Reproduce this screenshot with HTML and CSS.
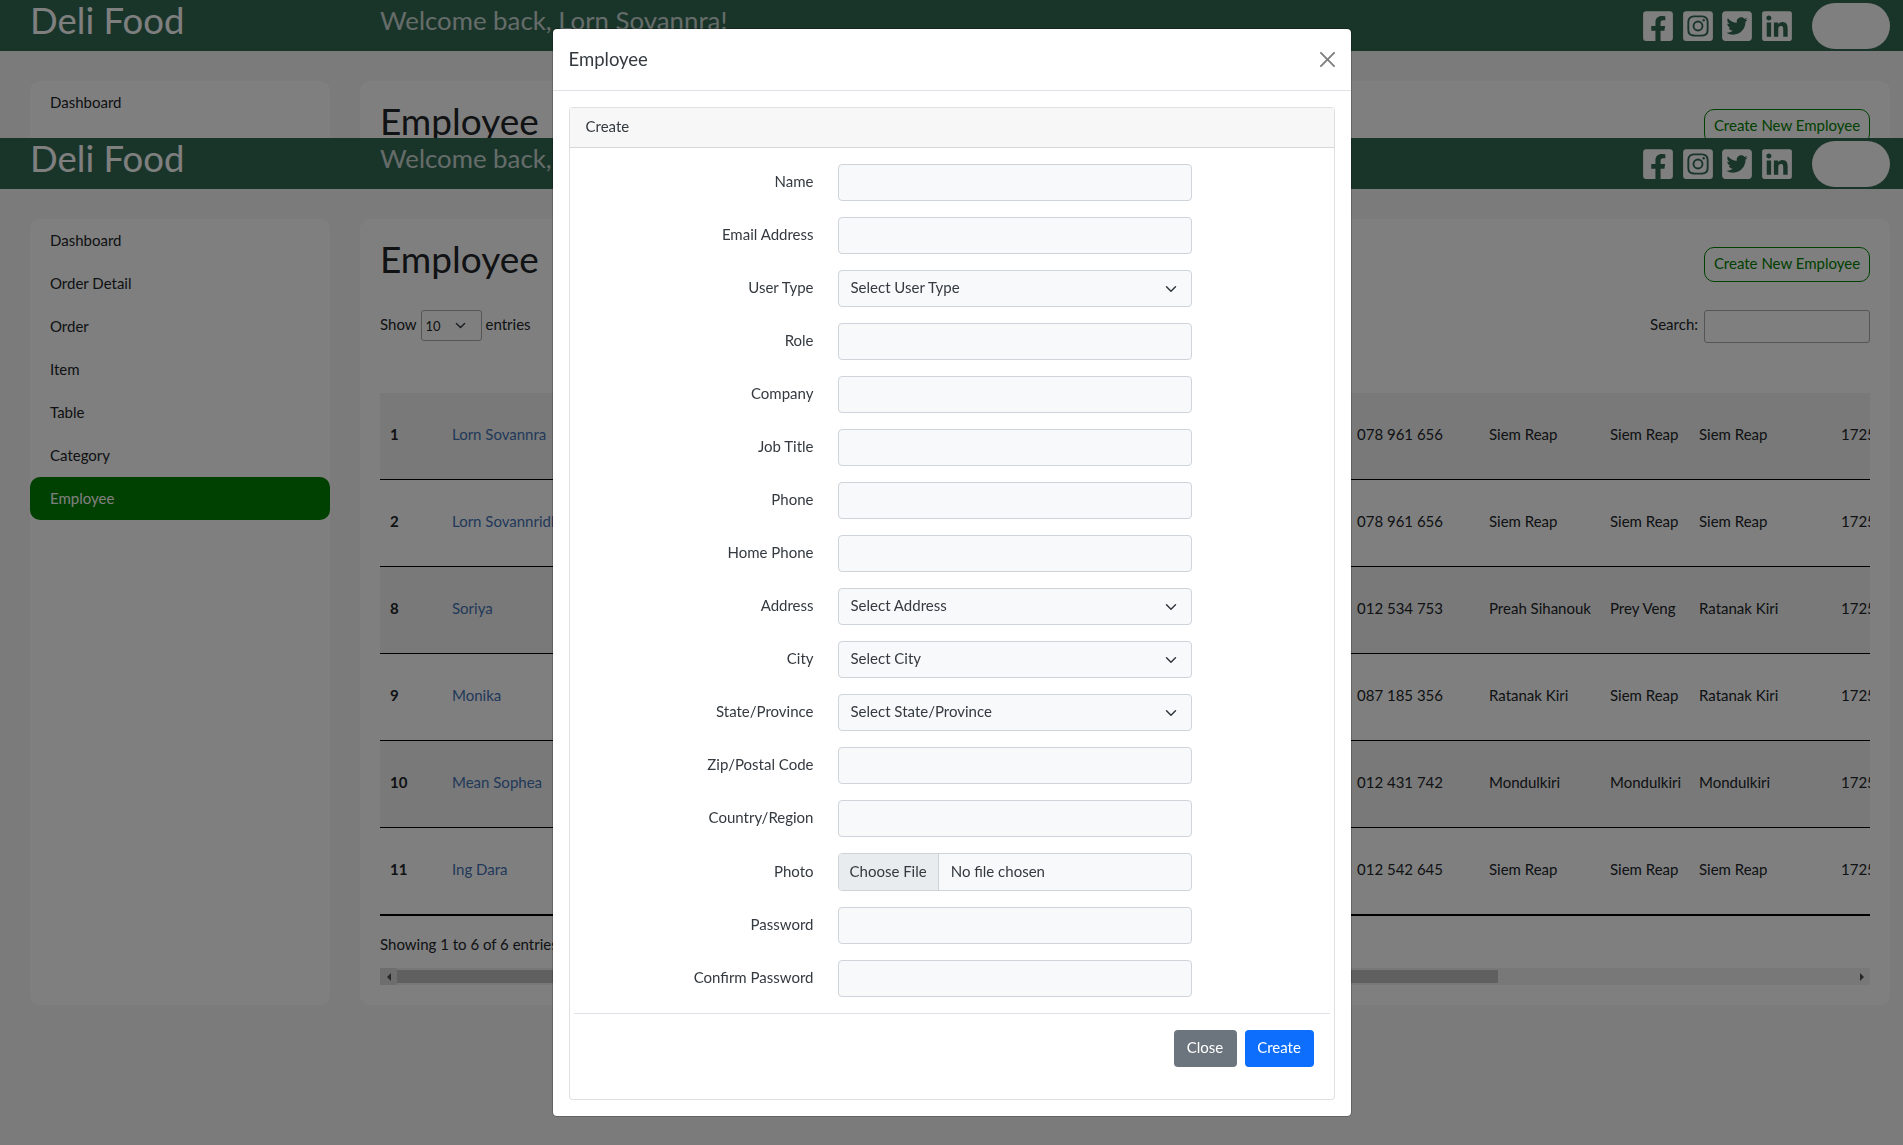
FILE: index.html
```html
<!DOCTYPE html>
<html lang="en">
<head>
    <meta charset="UTF-8">
    <title>Deli Food - Employee</title>
    <link rel="stylesheet" href="styles.css">
</head>
<body>

<svg class="icon-defs" aria-hidden="true">
    <symbol id="ic-facebook" viewBox="0 0 448 512"><path d="M400 32H48A48 48 0 0 0 0 80v352a48 48 0 0 0 48 48h137.25V327.69h-63V256h63v-54.64c0-62.15 37-96.48 93.67-96.48 27.14 0 55.52 4.84 55.52 4.84v61h-31.27c-30.81 0-40.42 19.12-40.42 38.73V256h68.78l-11 71.69h-57.78V480H400a48 48 0 0 0 48-48V80a48 48 0 0 0-48-48z"/></symbol>
    <symbol id="ic-instagram" viewBox="0 0 448 512"><path d="M224,202.66A53.34,53.34,0,1,0,277.36,256,53.38,53.38,0,0,0,224,202.66Zm124.71-41a54,54,0,0,0-30.41-30.41c-21-8.29-71-6.43-94.3-6.43s-73.25-1.93-94.31,6.43a54,54,0,0,0-30.41,30.41c-8.28,21-6.43,71.05-6.43,94.33S91,329.26,99.32,350.33a54,54,0,0,0,30.41,30.41c21,8.29,71,6.43,94.31,6.43s73.24,1.93,94.3-6.43a54,54,0,0,0,30.41-30.41c8.35-21,6.43-71.05,6.43-94.33S357.1,182.74,348.75,161.67ZM224,338a82,82,0,1,1,82-82A81.9,81.9,0,0,1,224,338Zm85.38-148.3a19.14,19.14,0,1,1,19.13-19.14A19.1,19.1,0,0,1,309.42,189.74ZM400,32H48A48,48,0,0,0,0,80V432a48,48,0,0,0,48,48H400a48,48,0,0,0,48-48V80A48,48,0,0,0,400,32ZM382.88,322c-1.29,25.63-7.14,48.34-25.85,67s-41.4,24.63-67,25.85c-26.41,1.49-105.59,1.49-132,0-25.63-1.29-48.26-7.15-67-25.85s-24.63-41.42-25.85-67c-1.49-26.42-1.49-105.61,0-132,1.29-25.63,7.07-48.34,25.85-67s41.47-24.56,67-25.78c26.41-1.49,105.59-1.49,132,0,25.63,1.29,48.33,7.15,67,25.85s24.63,41.42,25.85,67.05C384.37,216.44,384.37,295.56,382.88,322Z"/></symbol>
    <symbol id="ic-twitter" viewBox="0 0 448 512"><path d="M400 32H48C21.5 32 0 53.5 0 80v352c0 26.5 21.5 48 48 48h352c26.5 0 48-21.5 48-48V80c0-26.5-21.5-48-48-48zm-48.9 158.8c.2 2.8.2 5.7.2 8.5 0 86.7-66 186.6-186.6 186.6-37.2 0-71.7-10.8-100.7-29.4 5.3.6 10.4.8 15.8.8 30.7 0 58.9-10.4 81.4-28-28.8-.6-53-19.5-61.3-45.5 10.1 1.5 19.2 1.5 29.6-1.2-30-6.1-52.5-32.5-52.5-64.4v-.8c8.7 4.9 18.9 7.9 29.6 8.3a65.447 65.447 0 0 1-29.2-54.6c0-12.2 3.2-23.4 8.9-33.1 32.3 39.8 80.8 65.8 135.2 68.6-9.3-44.5 24-80.6 64-80.6 18.9 0 35.9 7.9 47.9 20.7 14.8-2.8 29-8.3 41.6-15.8-4.9 15.2-15.1 28-28.8 36.1 13.2-1.4 26-5.1 37.8-10.2-8.9 13.1-20.1 24.7-32.9 34z"/></symbol>
    <symbol id="ic-linkedin" viewBox="0 0 448 512"><path d="M416 32H31.9C14.3 32 0 46.5 0 64.3v383.4C0 465.5 14.3 480 31.9 480H416c17.6 0 32-14.5 32-32.3V64.3c0-17.8-14.4-32.3-32-32.3zM135.4 416H69V202.2h66.5V416zm-33.2-243c-21.3 0-38.5-17.3-38.5-38.5S80.9 96 102.2 96c21.2 0 38.5 17.3 38.5 38.5 0 21.3-17.2 38.5-38.5 38.5zm282.1 243h-66.4V312c0-24.8-.5-56.7-34.5-56.7-34.6 0-39.9 27-39.9 54.9V416h-66.4V202.2h63.7v29.2h.9c8.9-16.8 30.6-34.5 62.9-34.5 67.2 0 79.7 44.3 79.7 101.9V416z"/></symbol>
</svg>

<!-- the page shows twice: the first copy is cut off where the second begins -->
<div class="page-clip">
    <div class="page">
        <header class="topbar">
            <div class="logo">Deli Food</div>
            <div class="welcome">Welcome back, Lorn Sovannra!</div>
            <div class="socials">
                <svg class="social"><use href="#ic-facebook"/></svg>
                <svg class="social"><use href="#ic-instagram"/></svg>
                <svg class="social"><use href="#ic-twitter"/></svg>
                <svg class="social"><use href="#ic-linkedin"/></svg>
            </div>
            <div class="user-pill"></div>
        </header>
        <div class="content">
            <nav class="sidebar">
                <a class="side-link">Dashboard</a>
            </nav>
            <main class="panel">
                <div class="panel-head">
                    <h1>Employee</h1>
                    <a class="btn-new">Create New Employee</a>
                </div>
            </main>
        </div>
    </div>
</div>

<div class="page">
    <header class="topbar">
        <div class="logo">Deli Food</div>
        <div class="welcome">Welcome back, Lorn Sovannra!</div>
        <div class="socials">
            <svg class="social"><use href="#ic-facebook"/></svg>
            <svg class="social"><use href="#ic-instagram"/></svg>
            <svg class="social"><use href="#ic-twitter"/></svg>
            <svg class="social"><use href="#ic-linkedin"/></svg>
        </div>
        <div class="user-pill"></div>
    </header>

    <div class="content">
        <nav class="sidebar">
            <a class="side-link">Dashboard</a>
            <a class="side-link">Order Detail</a>
            <a class="side-link">Order</a>
            <a class="side-link">Item</a>
            <a class="side-link">Table</a>
            <a class="side-link">Category</a>
            <a class="side-link active">Employee</a>
        </nav>

        <main class="panel">
            <div class="panel-head">
                <h1>Employee</h1>
                <a class="btn-new">Create New Employee</a>
            </div>

            <div class="table-tools">
                <label class="tool-label">Show
                    <select class="length-select"><option>10</option></select>
                    entries</label>
                <label class="tool-label">Search:
                    <input class="search-input" type="search">
                </label>
            </div>

            <div class="table-wrap">
                <table class="emp-table">
                    <colgroup>
                        <col class="c-id"><col class="c-name"><col class="c-hidden">
                        <col class="c-phone"><col class="c-addr"><col class="c-city">
                        <col class="c-state"><col class="c-zip">
                    </colgroup>
                    <tr>
                        <td class="id">1</td><td><a class="link">Lorn Sovannra</a></td><td></td>
                        <td>078 961 656</td><td>Siem Reap</td><td>Siem Reap</td><td>Siem Reap</td><td>17250</td>
                    </tr>
                    <tr>
                        <td class="id">2</td><td><a class="link">Lorn Sovannridh</a></td><td></td>
                        <td>078 961 656</td><td>Siem Reap</td><td>Siem Reap</td><td>Siem Reap</td><td>17250</td>
                    </tr>
                    <tr>
                        <td class="id">8</td><td><a class="link">Soriya</a></td><td></td>
                        <td>012 534 753</td><td>Preah Sihanouk</td><td>Prey Veng</td><td>Ratanak Kiri</td><td>17250</td>
                    </tr>
                    <tr>
                        <td class="id">9</td><td><a class="link">Monika</a></td><td></td>
                        <td>087 185 356</td><td>Ratanak Kiri</td><td>Siem Reap</td><td>Ratanak Kiri</td><td>17250</td>
                    </tr>
                    <tr>
                        <td class="id">10</td><td><a class="link">Mean Sophea</a></td><td></td>
                        <td>012 431 742</td><td>Mondulkiri</td><td>Mondulkiri</td><td>Mondulkiri</td><td>17250</td>
                    </tr>
                    <tr>
                        <td class="id">11</td><td><a class="link">Ing Dara</a></td><td></td>
                        <td>012 542 645</td><td>Siem Reap</td><td>Siem Reap</td><td>Siem Reap</td><td>17250</td>
                    </tr>
                </table>
            </div>

            <div class="table-info">Showing 1 to 6 of 6 entries</div>

            <div class="fake-scroll">
                <span class="scroll-btn left"><i class="arrow-left"></i></span>
                <span class="scroll-thumb"></span>
                <span class="scroll-btn"><i class="arrow-right"></i></span>
            </div>
        </main>
    </div>
</div>

<div class="backdrop">
    <div class="modal">
        <div class="modal-header">
            <div class="modal-title">Employee</div>
            <svg class="btn-close" viewBox="0 0 16 16"><path d="M.293.293a1 1 0 011.414 0L8 6.586 14.293.293a1 1 0 111.414 1.414L9.414 8l6.293 6.293a1 1 0 01-1.414 1.414L8 9.414l-6.293 6.293a1 1 0 01-1.414-1.414L6.586 8 .293 1.707a1 1 0 010-1.414z"/></svg>
        </div>
        <div class="modal-body">
            <div class="card">
                <div class="card-header">Create</div>
                <form class="card-body">
                    <div class="form-row"><label>Name</label><input class="form-control" type="text"></div>
                    <div class="form-row"><label>Email Address</label><input class="form-control" type="text"></div>
                    <div class="form-row"><label>User Type</label><select class="form-control form-select"><option>Select User Type</option></select></div>
                    <div class="form-row"><label>Role</label><input class="form-control" type="text"></div>
                    <div class="form-row"><label>Company</label><input class="form-control" type="text"></div>
                    <div class="form-row"><label>Job Title</label><input class="form-control" type="text"></div>
                    <div class="form-row"><label>Phone</label><input class="form-control" type="text"></div>
                    <div class="form-row"><label>Home Phone</label><input class="form-control" type="text"></div>
                    <div class="form-row"><label>Address</label><select class="form-control form-select"><option>Select Address</option></select></div>
                    <div class="form-row"><label>City</label><select class="form-control form-select"><option>Select City</option></select></div>
                    <div class="form-row"><label>State/Province</label><select class="form-control form-select"><option>Select State/Province</option></select></div>
                    <div class="form-row"><label>Zip/Postal Code</label><input class="form-control" type="text"></div>
                    <div class="form-row"><label>Country/Region</label><input class="form-control" type="text"></div>
                    <div class="form-row"><label>Photo</label><input class="form-control form-file" type="file"></div>
                    <div class="form-row"><label>Password</label><input class="form-control" type="password"></div>
                    <div class="form-row"><label>Confirm Password</label><input class="form-control" type="password"></div>
                    <div class="form-footer">
                        <button class="btn btn-close-modal" type="button">Close</button>
                        <button class="btn btn-create" type="button">Create</button>
                    </div>
                </form>
            </div>
        </div>
    </div>
</div>

</body>
</html>
```

FILE: styles.css
```css
* {
    box-sizing: border-box;
}

body {
    margin: 0;
    background-color: #f7f7f7;
    color: #212529;
    font-family: 'Lato', 'Noto Sans', sans-serif;
    font-size: 15px;
    line-height: 1.6;
    height: 1145px;
    overflow: hidden;
}

.icon-defs {
    display: none;
}

.page-clip {
    height: 138px;
    overflow: hidden;
}

/* top bar */
.topbar {
    display: flex;
    height: 51px;
    padding: 0 13px 0 30px;
    background-color: #336a54;
}

.logo {
    width: 350px;
    color: #fff;
    font-size: 36.5px;
    line-height: 40px;
}

.welcome {
    flex: 1;
    color: rgba(255, 255, 255, 0.75);
    font-size: 25.8px;
    line-height: 40px;
}

.socials {
    display: flex;
    gap: 9.7px;
    align-items: center;
    margin-right: 20px;
}

.social {
    display: block;
    width: 30px;
    height: 34px;
    fill: #fff;
}

.user-pill {
    align-self: center;
    width: 78px;
    height: 46px;
    background-color: #fff;
    border-radius: 23px;
}

/* content */
.content {
    display: grid;
    grid-template-columns: 300px 1530px;
    gap: 30px;
    padding: 30px 13px 0 30px;
}

.sidebar {
    height: 786px;
    background-color: #fff;
    border-radius: 10px;
}

.side-link {
    display: block;
    height: 43px;
    padding-left: 20px;
    line-height: 42px;
    border-radius: 10px;
}

.side-link.active {
    background-color: #008000;
    color: #fff;
}

.panel {
    height: 786px;
    padding: 20px;
    background-color: #fff;
    border-radius: 10px;
}

.panel-head {
    display: flex;
    justify-content: space-between;
    align-items: flex-end;
    height: 43px;
}

h1 {
    margin: 0;
    font-size: 37px;
    font-weight: 400;
    line-height: 40px;
    align-self: flex-start;
}

.btn-new {
    width: 166px;
    height: 35px;
    border: 1px solid #008000;
    border-radius: 10px;
    color: #008000;
    line-height: 31px;
    text-align: center;
}

.table-tools {
    display: flex;
    justify-content: space-between;
    margin-top: 28px;
    height: 83px;
}

.tool-label {
    display: flex;
    gap: 4px;
    align-items: flex-start;
    line-height: 29px;
}

.length-select {
    width: 61px;
    height: 31px;
    padding-left: 4px;
    border: 1px solid #aaa;
    border-radius: 3px;
    appearance: none;
    background: transparent url("data:image/svg+xml,%3csvg xmlns='http://www.w3.org/2000/svg' viewBox='0 0 16 16'%3e%3cpath fill='none' stroke='%23343a40' stroke-linecap='round' stroke-linejoin='round' stroke-width='2' d='M2 5l6 6 6-6'/%3e%3c/svg%3e") no-repeat right 14px center / 13px 11px;
    color: #212529;
    font-family: inherit;
    font-size: 13px;
}

.search-input {
    width: 166px;
    height: 33px;
    margin-left: 2px;
    border: 1px solid #aaa;
    border-radius: 3px;
    background: transparent;
}

.table-wrap {
    overflow: hidden;
}

.emp-table {
    table-layout: fixed;
    width: 1580px;
    border-collapse: separate;
    border-spacing: 0;
}

.c-id { width: 62px; }
.c-name { width: 140px; }
.c-hidden { width: 765px; }
.c-phone { width: 132px; }
.c-addr { width: 121px; }
.c-city { width: 89px; }
.c-state { width: 142px; }
.c-zip { width: 129px; }

.emp-table td {
    height: 87px;
    padding: 0 10px 4px;
    border-bottom: 1px solid #000;
    vertical-align: middle;
    white-space: nowrap;
}

.emp-table tr:nth-child(odd) td {
    background-color: rgba(0, 0, 0, 0.05);
}

.emp-table tr:last-child td {
    height: 88px;
    border-bottom-width: 2px;
}

.emp-table .id {
    font-weight: 700;
}

.link {
    color: #4472b4;
}

.table-info {
    margin-top: 16px;
    height: 36px;
}

.fake-scroll {
    display: flex;
    align-items: center;
    height: 17px;
    background-color: #f1f1f1;
}

.scroll-btn {
    display: flex;
    justify-content: center;
    align-items: center;
    width: 17px;
    height: 17px;
}

.scroll-btn.left {
    background-color: #dcdcdc;
}

.scroll-thumb {
    width: 1101px;
    height: 13px;
    margin-right: auto;
    background-color: #c1c1c1;
}

.arrow-left {
    border: 4px solid transparent;
    border-left: 0;
    border-right-color: #505050;
}

.arrow-right {
    border: 4px solid transparent;
    border-right: 0;
    border-left-color: #505050;
}

/* modal */
.backdrop {
    position: fixed;
    inset: 0;
    background-color: rgba(0, 0, 0, 0.5);
}

.modal {
    width: 800px;
    margin: 28px auto 0;
    background-color: #fff;
    border: 1px solid rgba(0, 0, 0, 0.2);
    border-radius: 5px;
    background-clip: padding-box;
    color: #343a40;
}

.modal-header {
    display: flex;
    justify-content: space-between;
    align-items: center;
    height: 62px;
    padding: 0 16px 0 16px;
    border-bottom: 1px solid #dee2e6;
}

.modal-title {
    font-size: 18.5px;
}

.btn-close {
    width: 15px;
    height: 15px;
    opacity: 0.5;
}

.modal-body {
    padding: 16px;
}

.card {
    background-color: #fff;
    border: 1px solid rgba(0, 0, 0, 0.125);
    border-radius: 4px;
}

.card-header {
    height: 40px;
    padding: 6px 16px;
    background-color: #f7f7f7;
    border-bottom: 1px solid rgba(0, 0, 0, 0.125);
}

.card-body {
    padding: 16px 4px;
}

.form-row {
    display: grid;
    grid-template-columns: 228px 354px;
    gap: 24px;
    align-items: center;
    margin-bottom: 16px;
    padding-left: 12px;
}

.form-row label {
    padding-bottom: 3px;
    text-align: right;
}

.form-control {
    display: block;
    width: 100%;
    height: 37px;
    padding: 4px 12px 8px;
    background-color: #f8f9fa;
    border: 1px solid #ced4da;
    border-radius: 4px;
    color: #343a40;
    font-family: inherit;
    font-size: inherit;
}

.form-select {
    appearance: none;
    background-image: url("data:image/svg+xml,%3csvg xmlns='http://www.w3.org/2000/svg' viewBox='0 0 16 16'%3e%3cpath fill='none' stroke='%23343a40' stroke-linecap='round' stroke-linejoin='round' stroke-width='2' d='M2 5l6 6 6-6'/%3e%3c/svg%3e");
    background-repeat: no-repeat;
    background-position: right 12px center;
    background-size: 16px 12px;
}

.form-file {
    height: 38px;
    padding: 0;
    line-height: 33px;
}

.form-file::file-selector-button {
    height: 36px;
    margin-right: 12px;
    padding: 0 11px 3px;
    background-color: #e9ecef;
    border: 0;
    border-right: 1px solid #ced4da;
    color: #343a40;
    font-family: inherit;
    font-size: inherit;
}

.form-footer {
    display: flex;
    justify-content: flex-end;
    gap: 8px;
    padding: 16px 16px 16px;
    border-top: 1px solid #dee2e6;
}

.btn {
    height: 37px;
    padding: 0 0 3px;
    border: 1px solid transparent;
    border-radius: 4px;
    color: #fff;
    font-family: inherit;
    font-size: inherit;
}

.btn-close-modal {
    width: 63px;
    background-color: #6c757d;
}

.btn-create {
    width: 69px;
    background-color: #0d6efd;
}
```
